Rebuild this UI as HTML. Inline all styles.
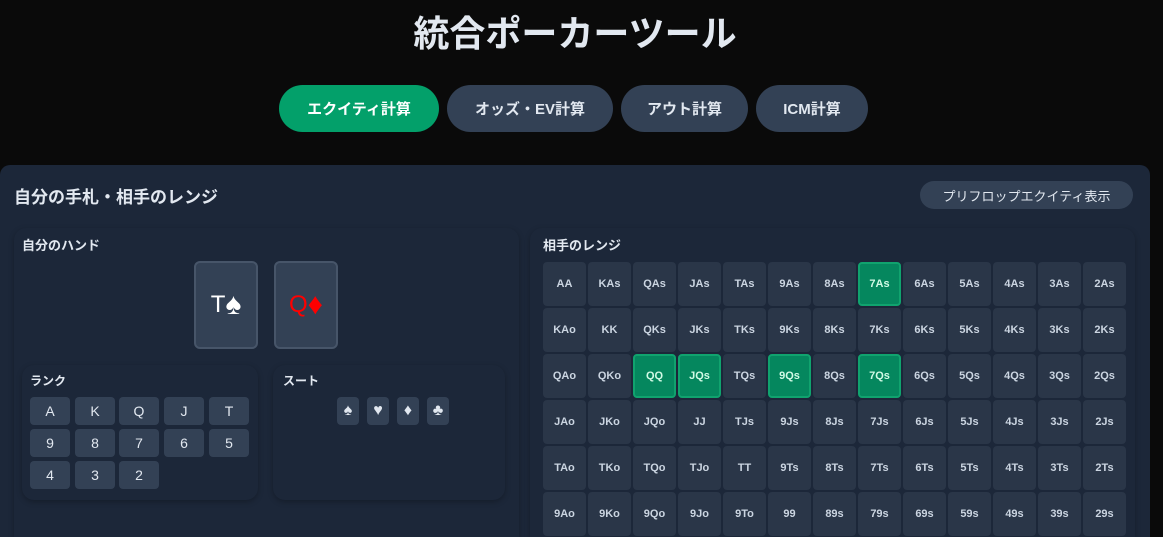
<!DOCTYPE html>
<html><head><meta charset="utf-8"><style>
*{margin:0;padding:0;box-sizing:border-box}
html,body{width:1163px;height:537px;overflow:hidden}
body{background:#0a0a0a;font-family:"Liberation Sans","Noto Sans CJK JP",sans-serif;color:#e2e8f0;position:relative}
.a{position:absolute}
h1{position:absolute;left:0;width:1150px;top:9px;text-align:center;font-size:36px;font-weight:700;color:#e2e8f0;line-height:50px}
.tab{position:absolute;top:85px;height:47px;border-radius:24px;background:#334155;color:#e2e8f0;font-weight:700;font-size:15px;display:flex;align-items:center;justify-content:center}
.panel{left:0;top:165px;width:1150px;height:372px;background:#1c2739;border-radius:10px 10px 0 0}
.sub{background:#1c2739;border-radius:12px;box-shadow:0 2px 6px rgba(0,0,0,.25)}
.card{position:absolute;top:261px;width:64px;height:88px;background:#334155;border:2px solid #475569;border-radius:6px;display:flex;align-items:center;justify-content:center;font-size:24px}
.card span{font-size:30px}
.rb{position:absolute;width:40px;height:28px;background:#334155;border-radius:4px;display:flex;align-items:center;justify-content:center;font-size:14px;color:#e2e8f0}
.sb{position:absolute;top:397px;width:22px;height:28px;background:#334155;border-radius:4px;display:flex;align-items:center;justify-content:center;font-size:16px;color:#e2e8f0}
.gw{position:absolute;left:543px;top:262px;width:590px;height:275px;overflow:hidden}
.grid{display:grid;grid-template-columns:repeat(13,43px);grid-auto-rows:44px;column-gap:2px;row-gap:2px}
.grid div{background:#2a3648;border-radius:4px;display:flex;align-items:center;justify-content:center;font-size:11px;font-weight:700;color:#cbd5e1}
.grid div.g{background:#05875e;border:2px solid #10a36e;color:#d1fae5}
</style></head><body>
<h1>統合ポーカーツール</h1>
<div class="tab" style="left:279px;width:160px;background:#03a06a;color:#fff">エクイティ計算</div>
<div class="tab" style="left:447px;width:166px">オッズ・EV計算</div>
<div class="tab" style="left:621px;width:127px">アウト計算</div>
<div class="tab" style="left:756px;width:112px">ICM計算</div>
<div class="a panel"></div>
<div class="a" style="left:14px;top:183px;font-size:17px;font-weight:700">自分の手札・相手のレンジ</div>
<div class="a" style="left:920px;top:181px;width:213px;height:28px;border-radius:14px;background:#334155;font-size:13px;display:flex;align-items:center;justify-content:center;color:#e2e8f0">プリフロップエクイティ表示</div>
<div class="a sub" style="left:14px;top:228px;width:505px;height:309px;border-radius:12px 12px 0 0"></div>
<div class="a sub" style="left:530px;top:228px;width:605px;height:309px;border-radius:12px 12px 0 0"></div>
<div class="a" style="left:22px;top:235px;font-size:13px;font-weight:700">自分のハンド</div>
<div class="card" style="left:194px;color:#fff">T<span>♠</span></div>
<div class="card" style="left:274px;color:#f00">Q<span>♦</span></div>
<div class="a sub" style="left:22px;top:365px;width:236px;height:135px"></div>
<div class="a sub" style="left:273px;top:365px;width:232px;height:135px"></div>
<div class="a" style="left:30px;top:372px;font-size:12px;font-weight:700">ランク</div>
<div class="a" style="left:283px;top:372px;font-size:12px;font-weight:700">スート</div>
<div class="rb" style="left:30px;top:397px">A</div><div class="rb" style="left:75px;top:397px">K</div><div class="rb" style="left:119px;top:397px">Q</div><div class="rb" style="left:164px;top:397px">J</div><div class="rb" style="left:209px;top:397px">T</div>
<div class="rb" style="left:30px;top:429px">9</div><div class="rb" style="left:75px;top:429px">8</div><div class="rb" style="left:119px;top:429px">7</div><div class="rb" style="left:164px;top:429px">6</div><div class="rb" style="left:209px;top:429px">5</div>
<div class="rb" style="left:30px;top:461px">4</div><div class="rb" style="left:75px;top:461px">3</div><div class="rb" style="left:119px;top:461px">2</div>
<div class="sb" style="left:337px">♠</div><div class="sb" style="left:367px">♥</div><div class="sb" style="left:397px">♦</div><div class="sb" style="left:427px">♣</div>
<div class="a" style="left:543px;top:235px;font-size:13px;font-weight:700">相手のレンジ</div>
<div class="gw"><div class="grid">
<div>AA</div><div>KAs</div><div>QAs</div><div>JAs</div><div>TAs</div><div>9As</div><div>8As</div><div class="g">7As</div><div>6As</div><div>5As</div><div>4As</div><div>3As</div><div>2As</div>
<div>KAo</div><div>KK</div><div>QKs</div><div>JKs</div><div>TKs</div><div>9Ks</div><div>8Ks</div><div>7Ks</div><div>6Ks</div><div>5Ks</div><div>4Ks</div><div>3Ks</div><div>2Ks</div>
<div>QAo</div><div>QKo</div><div class="g">QQ</div><div class="g">JQs</div><div>TQs</div><div class="g">9Qs</div><div>8Qs</div><div class="g">7Qs</div><div>6Qs</div><div>5Qs</div><div>4Qs</div><div>3Qs</div><div>2Qs</div>
<div>JAo</div><div>JKo</div><div>JQo</div><div>JJ</div><div>TJs</div><div>9Js</div><div>8Js</div><div>7Js</div><div>6Js</div><div>5Js</div><div>4Js</div><div>3Js</div><div>2Js</div>
<div>TAo</div><div>TKo</div><div>TQo</div><div>TJo</div><div>TT</div><div>9Ts</div><div>8Ts</div><div>7Ts</div><div>6Ts</div><div>5Ts</div><div>4Ts</div><div>3Ts</div><div>2Ts</div>
<div>9Ao</div><div>9Ko</div><div>9Qo</div><div>9Jo</div><div>9To</div><div>99</div><div>89s</div><div>79s</div><div>69s</div><div>59s</div><div>49s</div><div>39s</div><div>29s</div>
<div>8Ao</div><div>8Ko</div><div>8Qo</div><div>8Jo</div><div>8To</div><div>98o</div><div>88</div><div>78s</div><div>68s</div><div>58s</div><div>48s</div><div>38s</div><div>28s</div>
</div></div>
</body></html>
